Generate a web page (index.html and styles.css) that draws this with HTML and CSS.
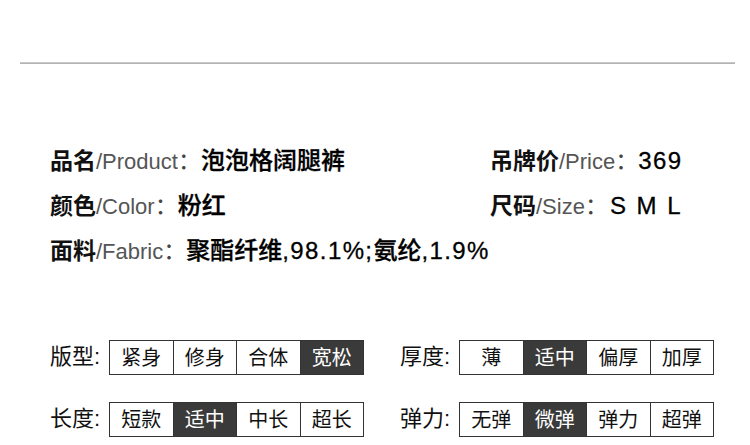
FILE: index.html
```html
<!DOCTYPE html>
<html lang="zh-CN">
<head>
<meta charset="utf-8">
<link rel="stylesheet" href="styles.css">
</head>
<body>
<div class="page">
  <div class="rule"></div>
  <div class="info">
    <div class="item"><span class="k">品名</span><span class="en">/Product</span><span class="colon">：</span><span class="v">泡泡格阔腿裤</span></div>
    <div class="item"><span class="k">吊牌价</span><span class="en">/Price</span><span class="colon">：</span><span class="v num">369</span></div>
    <div class="item"><span class="k">颜色</span><span class="en">/Color</span><span class="colon">：</span><span class="v">粉红</span></div>
    <div class="item"><span class="k">尺码</span><span class="en">/Size</span><span class="colon">：</span><span class="v sizes">S M L</span></div>
    <div class="item wide"><span class="k">面料</span><span class="en">/Fabric</span><span class="colon">：</span><span class="v">聚酯纤维<span class="num">,98.1%;</span>氨纶<span class="num">,1.9%</span></span></div>
  </div>
  <div class="specs">
    <div class="spec">
      <span class="label">版型:</span>
      <div class="opts"><span class="opt">紧身</span><span class="opt">修身</span><span class="opt">合体</span><span class="opt on">宽松</span></div>
    </div>
    <div class="spec">
      <span class="label">厚度:</span>
      <div class="opts"><span class="opt">薄</span><span class="opt on">适中</span><span class="opt">偏厚</span><span class="opt">加厚</span></div>
    </div>
    <div class="spec">
      <span class="label">长度:</span>
      <div class="opts"><span class="opt">短款</span><span class="opt on">适中</span><span class="opt">中长</span><span class="opt">超长</span></div>
    </div>
    <div class="spec">
      <span class="label">弹力:</span>
      <div class="opts"><span class="opt">无弹</span><span class="opt on">微弹</span><span class="opt">弹力</span><span class="opt">超弹</span></div>
    </div>
  </div>
</div>
</body>
</html>
```

FILE: styles.css
```css
html, body {
  margin: 0;
  padding: 0;
  background: #fff;
}
body {
  font-family: "Liberation Sans", "Noto Sans CJK SC", sans-serif;
  color: #111;
}
.page {
  width: 750px;
  height: 445px;
  overflow: hidden;
}
.rule {
  margin: 62px 15px 0 20px;
  height: 2px;
  background: linear-gradient(#d4d4d4, #a8a8a8);
}
.info {
  margin-top: 76px;
  padding-left: 50px;
  display: grid;
  grid-template-columns: 440px 1fr;
  grid-auto-rows: 45px;
}
.item {
  display: flex;
  align-items: baseline;
  padding-top: 9px;
  box-sizing: border-box;
  white-space: nowrap;
  line-height: 1;
}
.item.wide {
  grid-column: 1 / 3;
}
.k {
  font-size: 23px;
  font-weight: 700;
  color: #111;
}
.en {
  font-size: 22px;
  color: #555;
  font-weight: 400;
}
.colon {
  font-size: 23px;
  color: #444;
}
.v {
  font-size: 24px;
  font-weight: 500;
  color: #000;
  -webkit-text-stroke: 0.3px #000;
}
.num {
  letter-spacing: 1.4px;
}
.v.sizes {
  word-spacing: 4px;
  margin-left: 2px;
}
.specs {
  margin-top: 65px;
  padding-left: 50px;
  display: grid;
  grid-template-columns: 350px 350px;
  row-gap: 27px;
}
.spec {
  display: flex;
  align-items: center;
}
.label {
  width: 59px;
  font-size: 22px;
  line-height: 1;
  color: #111;
  position: relative;
  top: -1px;
}
.opts {
  display: flex;
  width: 253px;
  height: 33px;
  border: 1px solid #333;
}
.opt {
  flex: 1;
  display: flex;
  align-items: center;
  justify-content: center;
  font-size: 20px;
  line-height: 1;
  color: #111;
  border-left: 1px solid #333;
}
.opt:first-child {
  border-left: 0;
}
.opt.on {
  background: #3a3a3a;
  color: #fff;
}
```
